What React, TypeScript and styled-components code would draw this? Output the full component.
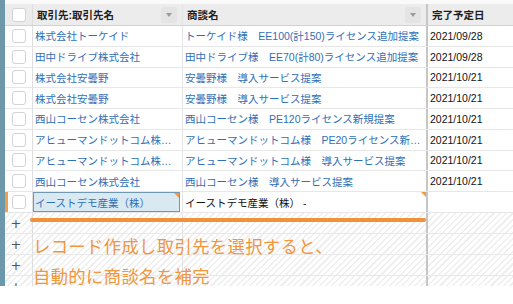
import React from "react";
import styled, { createGlobalStyle } from "styled-components";

const FONT = `"Liberation Sans", "Noto Sans CJK JP", sans-serif`;

const GlobalStyle = createGlobalStyle`
  html, body {
    margin: 0;
    padding: 0;
    background: #ffffff;
    font-family: ${FONT};
  }
  * {
    box-sizing: border-box;
  }
`;

type Opp = {
  account: string;
  name: string;
  date: string;
};

const rows: Opp[] = [
  { account: "株式会社トーケイド", name: "トーケイド様　EE100(計150)ライセンス追加提案", date: "2021/09/28" },
  { account: "田中ドライブ株式会社", name: "田中ドライブ様　EE70(計80)ライセンス追加提案", date: "2021/09/28" },
  { account: "株式会社安曇野", name: "安曇野様　導入サービス提案", date: "2021/10/21" },
  { account: "株式会社安曇野", name: "安曇野様　導入サービス提案", date: "2021/10/21" },
  { account: "西山コーセン株式会社", name: "西山コーセン様　PE120ライセンス新規提案", date: "2021/10/21" },
  { account: "アヒューマンドットコム株式会社", name: "アヒューマンドットコム様　PE20ライセンス新規提案", date: "2021/10/21" },
  { account: "アヒューマンドットコム株式会社", name: "アヒューマンドットコム様　導入サービス提案", date: "2021/10/21" },
  { account: "西山コーセン株式会社", name: "西山コーセン様　導入サービス提案", date: "2021/10/21" },
];

const Page = () => {
  return (
    <Wrap>
      <GlobalStyle />
      <Sheet>
        <Stripe />
        <Table>
          <HeaderRow>
            <Cell kind="check">
              <Check />
            </Cell>
            <HeadCell kind="account">
              <span>取引先:取引先名</span>
              <Arrow />
            </HeadCell>
            <HeadCell kind="name">
              <span>商談名</span>
              <Arrow />
            </HeadCell>
            <HeadCell kind="date">
              <span>完了予定日</span>
            </HeadCell>
          </HeaderRow>

          {rows.map((r, i) => (
            <Row key={`row-${i}`}>
              <Cell kind="check">
                <Check />
              </Cell>
              <Cell kind="account">
                <Link>{r.account}</Link>
              </Cell>
              <Cell kind="name">
                <Link>{r.name}</Link>
              </Cell>
              <Cell kind="date">
                <Plain>{r.date}</Plain>
              </Cell>
            </Row>
          ))}

          {/* 編集中の行 */}
          <Row editing>
            <Marker />
            <Cell kind="check">
              <Check />
            </Cell>
            <Cell kind="account">
              <EditBox>
                <Link>イーストデモ産業（株）</Link>
                <Corner />
              </EditBox>
            </Cell>
            <Cell kind="name">
              <Plain>イーストデモ産業（株） -</Plain>
              <Corner />
            </Cell>
            <Cell kind="date" />
          </Row>

          <AddArea>
            {[0, 1, 2, 3].map((n) => (
              <AddRow key={`add-${n}`}>
                <Cell kind="check">
                  <PlusSign>+</PlusSign>
                </Cell>
                <Cell kind="account" />
                <Cell kind="name" />
                <Cell kind="date" />
              </AddRow>
            ))}
          </AddArea>
        </Table>

        {/* 注釈 */}
        <Note>
          <Bar />
          <NoteText>
            <p>レコード作成し取引先を選択すると、</p>
            <p>自動的に商談名を補完</p>
          </NoteText>
        </Note>
      </Sheet>
    </Wrap>
  );
};

const Wrap = styled.div`
  width: 513px;
  height: 304px;
  overflow: hidden;
  background: #ffffff;
`;

const Sheet = styled.div`
  position: relative;
  display: flex;
  flex-direction: row;
  height: 286px;
  overflow: hidden;
`;

const Stripe = styled.div`
  width: 5px;
  flex: none;
  background: #6b98ab;
`;

const Table = styled.div`
  flex: 1;
  display: flex;
  flex-direction: column;
  padding-top: 4px;
  background: #fafafa;
  font-size: 10.5px;
`;

const gridCols = `28px 150px 245px 1fr`;

const HeaderRow = styled.div`
  display: grid;
  grid-template-columns: ${gridCols};
  height: 22px;
  flex: none;
  background: #ececec;
  border-bottom: 1px solid #d2d2d2;
`;

const Row = styled.div<{ editing?: boolean }>`
  position: relative;
  display: grid;
  grid-template-columns: ${gridCols};
  height: ${({ editing }) => (editing ? "21px" : "20.75px")};
  flex: none;
  background: #ffffff;
  border-bottom: 1px solid #e7e7e7;
`;

const Cell = styled.div<{ kind: "check" | "account" | "name" | "date" }>`
  position: relative;
  display: flex;
  align-items: center;
  min-width: 0;
  padding: 0 2px;
  justify-content: ${({ kind }) => (kind === "check" ? "center" : "flex-start")};
  border-right: ${({ kind }) =>
    kind === "check"
      ? "1px solid #dedede"
      : kind === "account"
      ? "1px solid #e4e4e4"
      : kind === "name"
      ? "2px solid #c6c6c6"
      : "none"};
`;

const HeadCell = styled(Cell)`
  justify-content: space-between;
  padding: 0 4px 0 4px;
  font-weight: bold;
  color: #1e1e1e;

  span {
    white-space: nowrap;
  }
`;

const Arrow = styled.div`
  width: 16px;
  height: 16px;
  margin-right: 1px;
  border-radius: 2px;
  background: #e4e4e4;
  display: flex;
  align-items: center;
  justify-content: center;

  &::after {
    content: "";
    border-left: 3px solid transparent;
    border-right: 3px solid transparent;
    border-top: 4px solid #9a9a9a;
  }
`;

const Check = styled.div`
  width: 14px;
  height: 14px;
  background: #ffffff;
  border: 1px solid #d3d3d3;
  border-radius: 3px;
`;

const Link = styled.span`
  color: #2f6fb6;
  white-space: nowrap;
  overflow: hidden;
  text-overflow: ellipsis;
`;

const Plain = styled.span`
  color: #111111;
  white-space: nowrap;
  overflow: hidden;
  text-overflow: ellipsis;
`;

const Marker = styled.div`
  position: absolute;
  left: 0;
  top: 0;
  bottom: 0;
  width: 3px;
  background: #f0a04a;
  z-index: 1;
`;

const EditBox = styled.div`
  position: relative;
  display: flex;
  align-items: center;
  width: calc(100% + 3px);
  height: 20px;
  margin-left: -2px;
  padding-left: 1px;
  background: #d9e9f2;
  border: 1px solid #6f98b3;
`;

const Corner = styled.div`
  position: absolute;
  top: 0;
  right: 0;
  width: 0;
  height: 0;
  border-top: 5px solid #ef9a45;
  border-left: 5px solid transparent;
`;

const AddArea = styled.div`
  flex: 1;
  display: flex;
  flex-direction: column;
  background: repeating-linear-gradient(
    135deg,
    #ffffff 0px,
    #ffffff 3px,
    #efefef 3px,
    #efefef 4.5px
  );
`;

const AddRow = styled.div`
  display: grid;
  grid-template-columns: ${gridCols};
  height: 21px;
  flex: none;
  border-bottom: 1px solid #e9e9e9;
`;

const PlusSign = styled.span`
  font-family: "DejaVu Sans", sans-serif;
  font-size: 13px;
  color: #555555;
  line-height: 1;
  margin-left: -5px;
`;

const Note = styled.div`
  position: absolute;
  left: 30px;
  top: 218px;
  width: 396px;
  display: flex;
  flex-direction: column;
`;

const Bar = styled.div`
  height: 4px;
  border-radius: 2px;
  background: #ef9239;
`;

const NoteText = styled.div`
  margin-top: 10px;
  padding-left: 3px;
  color: #f0963d;
  font-family: ${FONT};
  font-size: 17.3px;
  letter-spacing: 0.4px;

  p {
    margin: 0;
    line-height: 30px;
    white-space: nowrap;
  }
`;

export default function App() {
  return <Page />;
}
